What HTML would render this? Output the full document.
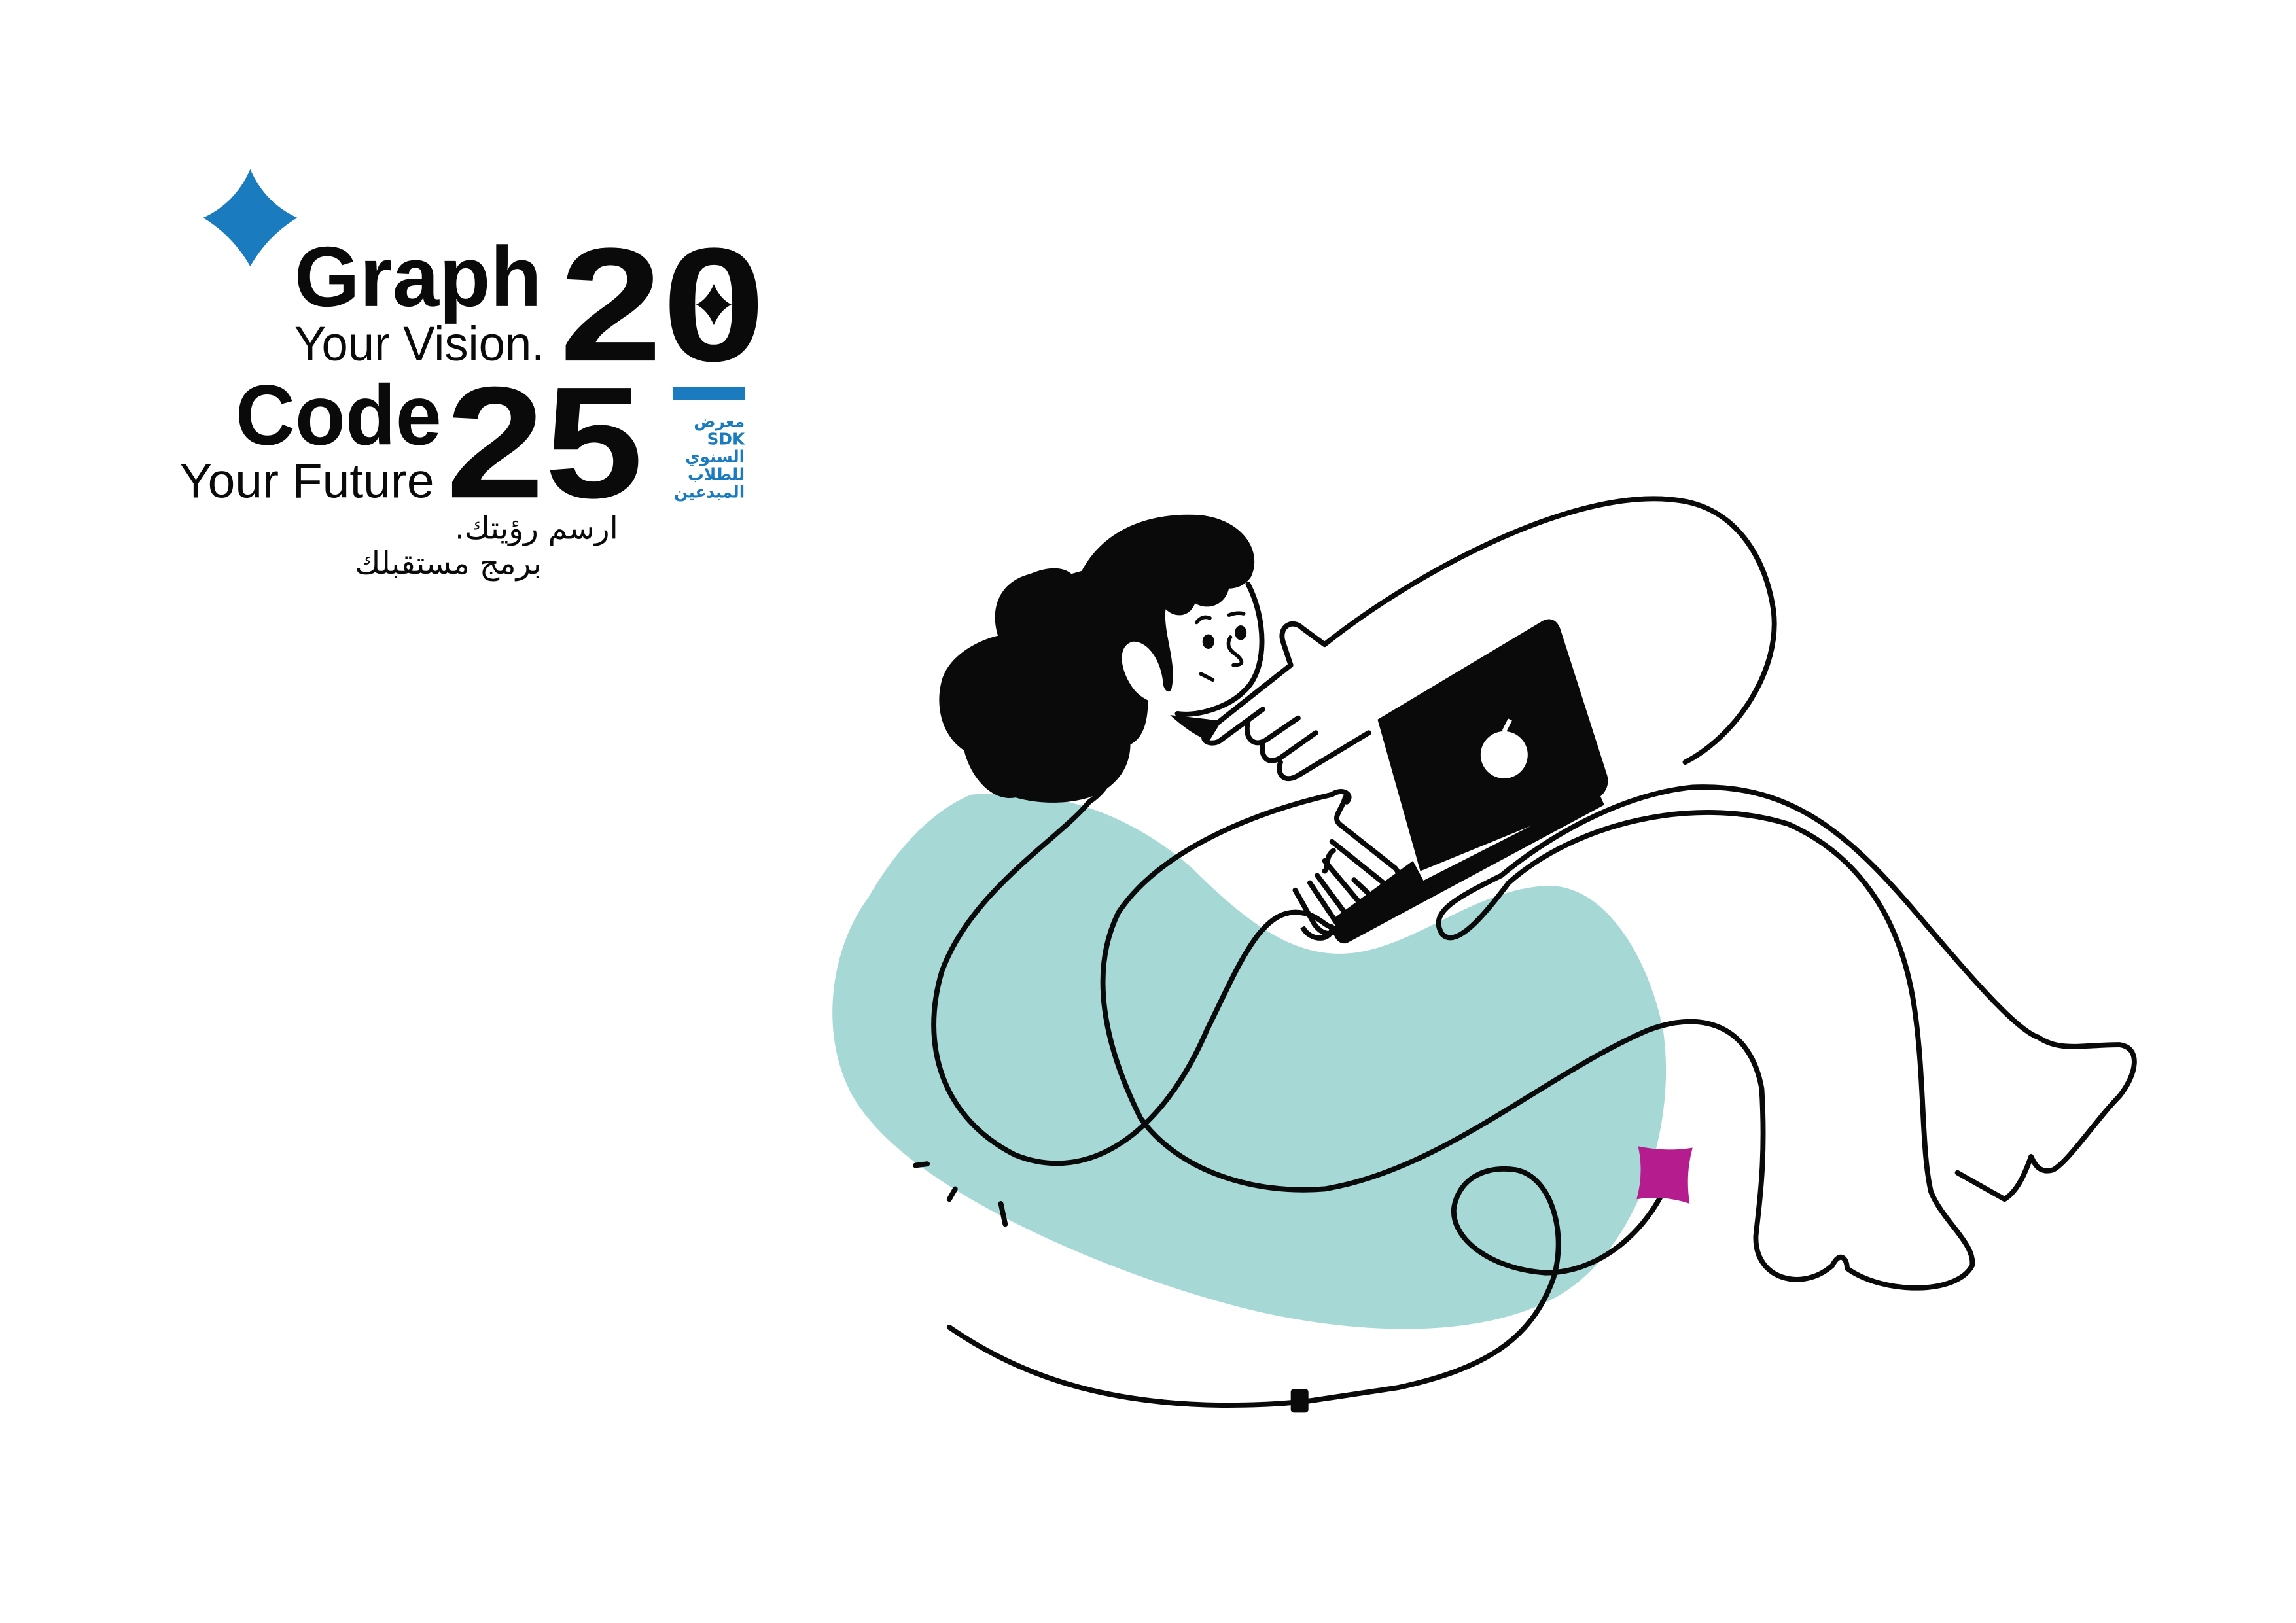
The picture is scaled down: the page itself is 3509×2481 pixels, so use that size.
<!DOCTYPE html>
<html><head><meta charset="utf-8"><style>
html,body{margin:0;padding:0;background:#fff}
svg{display:block}
</style></head><body>
<svg width="3509" height="2481" viewBox="0 0 1560 1103" xmlns="http://www.w3.org/2000/svg">
<rect width="1560" height="1103" fill="#fff"/>
<path d="M170,115 Q180,138 202,148 Q182,160 170,181 Q158,160 138,148 Q160,138 170,115Z" fill="#1a7bbf"/>
<g font-family="Liberation Sans, sans-serif" fill="#0a0a0a">
<text x="200" y="208" font-size="58" font-weight="bold" textLength="168" lengthAdjust="spacingAndGlyphs">Graph</text>
<text x="200" y="245" font-size="33" textLength="170" lengthAdjust="spacingAndGlyphs">Your Vision.</text>
<text x="380" y="245" font-size="110" font-weight="bold" textLength="140" lengthAdjust="spacingAndGlyphs">20</text>
<text x="160" y="302" font-size="58" font-weight="bold" textLength="140" lengthAdjust="spacingAndGlyphs">Code</text>
<text x="122" y="338" font-size="33" textLength="173" lengthAdjust="spacingAndGlyphs">Your Future</text>
<text x="303" y="338" font-size="108" font-weight="bold" textLength="134" lengthAdjust="spacingAndGlyphs">25</text>
</g>
<path d="M485,193 Q489,203 497,207 Q489,211 485,221 Q481,211 473,207 Q481,203 485,193Z" fill="#0a0a0a"/>
<rect x="457" y="263" width="49" height="9" fill="#1a7bbf"/>
<g font-family="DejaVu Sans, sans-serif" fill="#1a7bbf" font-weight="bold" font-size="11" text-anchor="start" direction="rtl">
<text x="506" y="290">معرض</text>
<text x="506" y="302">SDK</text>
<text x="506" y="314">السنوي</text>
<text x="506" y="326">للطلاب</text>
<text x="506" y="338">المبدعين</text>
</g>
<g font-family="DejaVu Sans, sans-serif" fill="#0a0a0a" font-size="21" direction="rtl" text-anchor="start">
<text x="420" y="366">ارسم رؤيتك.</text>
<text x="368" y="390">برمج مستقبلك</text>
</g>
<path d="M660,540 C720,535 770,555 810,590 C850,630 880,650 915,648 C960,645 1000,605 1050,602 C1090,600 1120,650 1130,700 C1140,770 1110,850 1060,880 C1000,915 900,905 830,885 C740,860 630,810 590,760 C555,720 560,650 590,610 C610,575 635,550 660,540Z" fill="#a6d8d5"/>
<path d="M735,388 C750,360 780,348 815,350 C845,353 858,375 850,392 C846,398 840,400 835,400 C832,412 820,415 812,410 C808,420 798,420 792,414 C790,430 800,450 796,468 C795,472 790,470 790,462 C788,448 780,436 770,436 C760,438 760,452 768,465 C772,472 778,475 780,476 C780,492 776,502 768,506 C768,520 760,535 740,542 C720,548 700,545 690,542 C675,545 660,530 655,510 C640,500 635,480 640,462 C645,445 665,435 678,432 C672,412 680,395 700,390 C712,385 722,385 728,390Z" fill="#0a0a0a"/>
<path d="M757,488 C762,520 755,535 740,545 C720,570 660,605 640,660 C625,710 640,760 690,785 C740,805 790,770 820,700 C840,660 855,620 880,620 C895,620 900,630 905,630" fill="none" stroke="#0a0a0a" stroke-width="3.5" stroke-linecap="round"/>
<path d="M848,397 C860,420 862,455 845,470 C835,480 815,487 800,485" fill="none" stroke="#0a0a0a" stroke-width="3.5" stroke-linecap="round"/>
<path d="M795,486 C805,495 815,502 822,503 L830,490 C815,488 805,487 795,486Z" fill="#0a0a0a"/>
<ellipse cx="821" cy="436" rx="4" ry="5" fill="#0a0a0a"/>
<ellipse cx="843" cy="430" rx="4" ry="5" fill="#0a0a0a"/>
<path d="M813,423 Q817,418 822,420 M835,418 Q840,416 845,417 M836,433 Q832,440 840,445 Q848,452 838,452 M816,458 L824,462" fill="none" stroke="#0a0a0a" stroke-width="2.5" stroke-linecap="round"/>
<path d="M820,497 L877,452 L872,437 C868,426 878,420 885,427 L900,438 C960,390 1070,330 1140,340 C1180,345 1200,380 1205,415 C1210,455 1180,500 1145,518" fill="none" stroke="#0a0a0a" stroke-width="3.5" stroke-linecap="round" stroke-linejoin="round"/>
<path d="M820,497 C815,502 820,507 828,504 L858,482 M848,490 C845,502 852,508 860,503 L882,488 M858,505 C856,515 862,520 870,515 L894,498 M870,518 C867,528 874,532 882,527 L930,498" fill="none" stroke="#0a0a0a" stroke-width="3.5" stroke-linecap="round"/>
<path d="M936,489 L1048,422 C1054,419 1058,422 1060,427 L1092,527 C1094,534 1090,540 1085,543 L965,592 Z" fill="#0a0a0a"/>
<path d="M905,630 L1086,538 L1090,547 L915,641 C910,642 906,638 905,630Z" fill="#0a0a0a"/>
<path d="M960,585 L905,625 L915,640 L968,600Z" fill="#0a0a0a"/>
<circle cx="1022" cy="513" r="16" fill="#fff"/>
<path d="M1022,497 L1026,489" stroke="#fff" stroke-width="3"/>
<path d="M915,545 C920,540 912,535 905,540 C860,550 790,575 760,620 C740,660 750,710 775,760 C800,795 850,812 900,808 C980,795 1050,730 1120,700 C1160,685 1190,700 1197,740 C1200,790 1195,820 1193,840 C1192,870 1225,878 1245,860 C1250,850 1255,855 1255,862 C1280,880 1330,880 1340,860 C1342,845 1320,830 1312,810 C1305,780 1308,730 1300,680 C1290,620 1260,580 1215,560 C1150,540 1070,560 1025,600 C1010,620 990,645 980,635 C970,620 990,610 1020,595 C1050,570 1100,540 1150,535 C1220,532 1260,570 1310,630 C1340,665 1370,700 1385,705 C1400,715 1415,710 1440,710 C1455,712 1452,730 1440,745 C1425,760 1405,790 1395,795 C1385,798 1382,790 1380,786 M1380,786 C1375,800 1370,810 1362,815 L1330,797" fill="none" stroke="#0a0a0a" stroke-width="3.5" stroke-linecap="round" stroke-linejoin="round"/>
<path d="M914,542 C912,550 905,555 910,560 L948,590 C955,598 945,605 940,600 L905,572 M906,578 C900,582 903,590 900,592 M900,585 L925,615 C930,623 922,628 915,622 L895,595 M890,600 L910,630 C905,637 898,635 893,628 L880,605 M920,598 L935,612" fill="none" stroke="#0a0a0a" stroke-width="3.5" stroke-linecap="round" stroke-linejoin="round"/>
<path d="M885,630 C890,640 905,640 905,630" fill="none" stroke="#0a0a0a" stroke-width="3.5"/>
<path d="M1130,810 C1115,840 1085,865 1050,865 C1010,862 985,840 988,820 C992,800 1010,792 1030,795 C1055,800 1065,840 1055,870 C1040,910 1010,930 950,943 L890,952 L880,953 C860,955 840,955 830,955 C760,954 700,940 645,902" fill="none" stroke="#0a0a0a" stroke-width="3.5" stroke-linecap="round"/>
<rect x="877" y="944" width="12" height="16" rx="2" fill="#0a0a0a"/>
<path d="M1113,779 Q1132,783 1150,780 Q1145,798 1148,818 Q1130,812 1112,815 Q1117,797 1113,779Z" fill="#b51d8f"/>
<path d="M622,792 L630,791 M645,815 L649,808 M680,818 L683,832" stroke="#0a0a0a" stroke-width="3.5" stroke-linecap="round"/>
</svg>
</body></html>
